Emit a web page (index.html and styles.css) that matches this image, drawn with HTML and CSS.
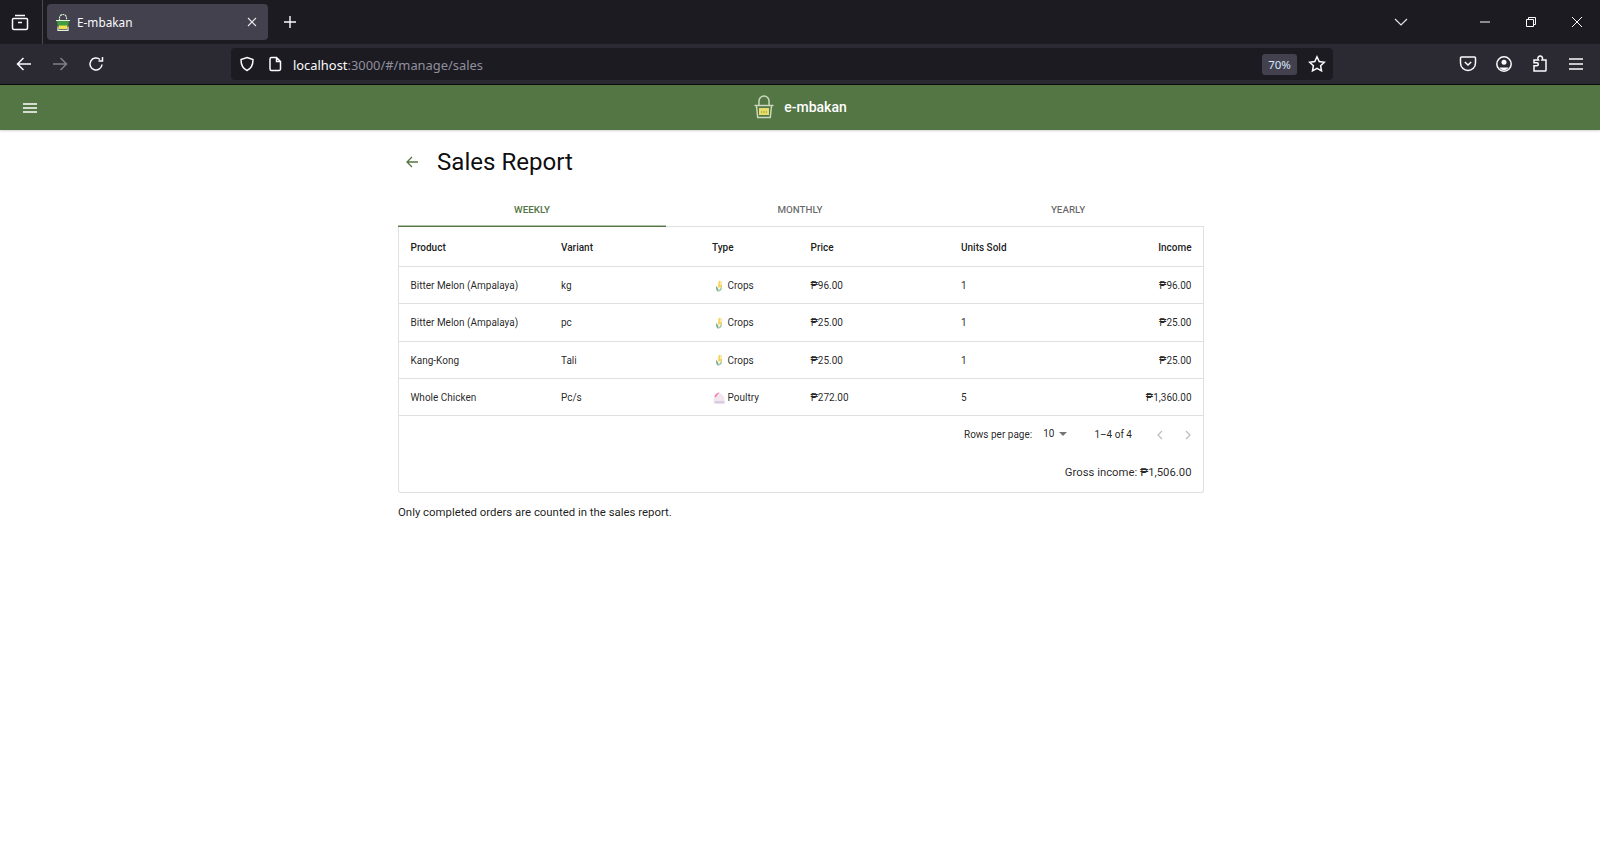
FILE: index.html
```html
<!DOCTYPE html>
<html lang="en">
<head>
<meta charset="utf-8">
<title>E-mbakan</title>
<link rel="stylesheet" href="styles.css">
</head>
<body>
<div class="tabstrip">
  <div class="strip-left">
    <svg class="ico" width="20" height="20" viewBox="0 0 20 20"><path d="M5 3.500h10M3.500 6.500h13a1 1 0 0 1 1 1V16a1.500 1.500 0 0 1-1.500 1.500H4A1.500 1.500 0 0 1 2.500 16V7.500a1 1 0 0 1 1-1zM8 10.500h4"/></svg>
  </div>
  <div class="tab">
    <svg class="favicon" width="14" height="17" viewBox="0 0 14 17"><path class="fav-handle" d="M3.500 7V4a3.500 3.500 0 0 1 7 0v3"/><path class="fav-body" d="M1 6.500h12l-.8 6H1.800z"/><path class="fav-rim" d="M0 6.500h14M2 12.500v3.800h10v-3.800"/><rect class="fav-tag" x="3" y="11.500" width="8" height="3.500"/></svg>
    <span class="tab-title">E-mbakan</span>
    <svg class="ico close" width="12" height="12" viewBox="0 0 12 12"><path d="M2 2l8 8M10 2l-8 8"/></svg>
  </div>
  <svg class="ico newtab" width="16" height="16" viewBox="0 0 16 16"><path d="M8 2v12M2 8h12"/></svg>
  <div class="spacer"></div>
  <svg class="ico listall" width="16" height="16" viewBox="0 0 16 16"><path d="M2 5l6 6 6-6"/></svg>
  <div class="winctl">
    <svg class="ico" width="12" height="12" viewBox="0 0 12 12"><path d="M1 6h10"/></svg>
    <svg class="ico" width="12" height="12" viewBox="0 0 12 12"><path d="M1.500 3.500h7v7h-7zM3.500 3.500v-2h7v7h-2"/></svg>
    <svg class="ico" width="12" height="12" viewBox="0 0 12 12"><path d="M1 1l10 10M11 1L1 11"/></svg>
  </div>
</div>
<div class="toolbar">
  <svg class="ico nav" width="18" height="18" viewBox="0 0 18 18"><path d="M16 9H2.500M8.500 3L2.500 9l6 6"/></svg>
  <svg class="ico nav dim" width="18" height="18" viewBox="0 0 18 18"><path d="M2 9h13.500M9.500 3l6 6-6 6"/></svg>
  <svg class="ico nav" width="18" height="18" viewBox="0 0 18 18"><path d="M15 9.500A6 6 0 1 1 13 4.500M15.500 2v4h-4"/></svg>
  <div class="urlbar">
    <svg class="ico shield" width="16" height="16" viewBox="0 0 16 16"><path d="M8 1.500l6 2c0 5-1.500 9-6 11-4.500-2-6-6-6-11z"/></svg>
    <svg class="ico page" width="14" height="16" viewBox="0 0 14 16"><path d="M2 3a1.500 1.500 0 0 1 1.500-1.500H8.500L12.500 5.500V13a1.500 1.500 0 0 1-1.500 1.500H3.500A1.500 1.500 0 0 1 2 13zM8.500 1.500V5.500h4"/></svg>
    <span class="url"><span class="url-host">localhost</span>:3000/#/manage/sales</span>
    <div class="spacer"></div>
    <span class="zoom">70%</span>
    <svg class="ico star" width="18" height="18" viewBox="0 0 18 18"><path d="M9 1.800l2.200 4.700 5.100.7-3.700 3.500.9 5.100L9 13.400l-4.500 2.400.9-5.100-3.700-3.500 5.100-.7z"/></svg>
  </div>
  <div class="tool-right">
    <svg class="ico" width="18" height="18" viewBox="-1 -1 18 18"><path d="M1.500 1h13a1 1 0 0 1 1 1V7a7.500 7.500 0 0 1-15 0V2a1 1 0 0 1 1-1zM4.800 6L8 9l3.200-3"/></svg>
    <svg class="ico" width="18" height="18" viewBox="0 0 18 18"><circle cx="9" cy="9" r="7.200"/><circle class="solid" cx="9" cy="7.200" r="2.500"/><path class="solid" d="M4.500 12.500h9c-1 1.700-2.600 2.700-4.500 2.700s-3.500-1-4.500-2.700z"/></svg>
    <svg class="ico" width="18" height="18" viewBox="0 0 18 18"><path d="M3 16V10.800H5.800C7.800 10.800 7.800 7.800 5.800 7.800H3V5H7.500L7 4C6.300 2.500 7.800 1 9.200 1s2.900 1.500 2.200 3L11 5h4V15.200a.8.8 0 0 1-.8.8z"/></svg>
    <svg class="ico" width="18" height="18" viewBox="-2 -2 18 18"><path d="M0 2h14M0 7h14M0 12h14"/></svg>
  </div>
</div>
<div class="appbar">
  <svg class="burger" width="14" height="10" viewBox="0 0 14 10"><path d="M0 1h14M0 5h14M0 9h14"/></svg>
  <div class="brand">
    <svg class="logo" width="22" height="24" viewBox="0 0 22 24"><path class="logo-line" d="M6 10V6a5 5 0 0 1 10 0v4"/><path class="logo-line" d="M1.500 10.500h19M3.500 11l1.200 11.500h12.600L18.500 11"/><rect class="logo-tag" x="6" y="13" width="10" height="7"/><path class="logo-dots" d="M8 17h6"/></svg>
    <span class="brand-name">e-mbakan</span>
  </div>
</div>
<main class="content">
  <div class="heading">
    <svg class="back" width="14" height="14" viewBox="0 0 14 14"><path d="M13 7H2M7 2L2 7l5 5"/></svg>
    <h1 class="title">Sales Report</h1>
  </div>
  <div class="tabs">
    <div class="tabs-item active">Weekly</div>
    <div class="tabs-item">Monthly</div>
    <div class="tabs-item">Yearly</div>
  </div>
  <div class="card">
    <table class="report">
      <thead>
        <tr>
          <th class="c-product">Product</th>
          <th class="c-variant">Variant</th>
          <th class="c-type">Type</th>
          <th class="c-price">Price</th>
          <th class="c-units">Units Sold</th>
          <th class="c-income">Income</th>
        </tr>
      </thead>
      <tbody>
        <tr>
          <td>Bitter Melon (Ampalaya)</td><td>kg</td>
          <td><span class="type"><svg class="emoji" width="14" height="12" viewBox="0 0 14 12"><use href="#corn"/></svg>Crops</span></td>
          <td>₱96.00</td><td>1</td><td class="c-income">₱96.00</td>
        </tr>
        <tr>
          <td>Bitter Melon (Ampalaya)</td><td>pc</td>
          <td><span class="type"><svg class="emoji" width="14" height="12" viewBox="0 0 14 12"><use href="#corn"/></svg>Crops</span></td>
          <td>₱25.00</td><td>1</td><td class="c-income">₱25.00</td>
        </tr>
        <tr>
          <td>Kang-Kong</td><td>Tali</td>
          <td><span class="type"><svg class="emoji" width="14" height="12" viewBox="0 0 14 12"><use href="#corn"/></svg>Crops</span></td>
          <td>₱25.00</td><td>1</td><td class="c-income">₱25.00</td>
        </tr>
        <tr class="row-last">
          <td>Whole Chicken</td><td>Pc/s</td>
          <td><span class="type"><svg class="emoji" width="14" height="12" viewBox="0 0 14 12"><use href="#hen"/></svg>Poultry</span></td>
          <td>₱272.00</td><td>5</td><td class="c-income">₱1,360.00</td>
        </tr>
      </tbody>
    </table>
    <div class="pager">
      <span>Rows per page:</span>
      <span class="pager-select">10<svg class="caret" width="8" height="4" viewBox="0 0 8 4"><path d="M0 0h8L4 4z"/></svg></span>
      <span class="pager-range">1–4 of 4</span>
      <svg class="chev" width="8" height="10" viewBox="0 0 8 10"><path d="M6 1L2 5l4 4"/></svg>
      <svg class="chev" width="8" height="10" viewBox="0 0 8 10"><path d="M2 1l4 4-4 4"/></svg>
    </div>
    <div class="gross">Gross income: ₱1,506.00</div>
  </div>
  <p class="note">Only completed orders are counted in the sales report.</p>
</main>
<svg class="defs" width="0" height="0">
  <symbol id="corn" viewBox="0 0 14 12">
    <path fill="#f4d35e" d="M6.500 1.500C7.500 0 10 .500 10 3.500V7.500H6z"/>
    <path fill="#f9edb5" d="M8 1C9.500 1.500 10 3 10 5H8z"/>
    <path fill="#7fb08a" d="M4 6C5.500 7 6.500 8.500 6.800 11.500H5.500C4.300 10.500 3.800 8 4 6z"/>
    <path fill="#9fc7a4" d="M10 7C10 9.500 9 11 6.800 11.500 7 9.500 8.200 8 10 7z"/>
  </symbol>
  <symbol id="hen" viewBox="0 0 14 12">
    <path fill="#f3e6ee" d="M1.500 11.500V7C1.500 4 4 1.500 7 1.500s5.500 2.500 5.500 5.500v4.500z"/>
    <path fill="#f07fa8" d="M2.500 4.500C3.500 2 5 .500 8 .500 6.500 1.500 5 3 3.800 5.500z"/>
    <path fill="#d9cbe3" d="M3 9h9.500v2.500H3z"/>
  </symbol>
</svg>
</body>
</html>
```
FILE: styles.css
```css
* { box-sizing: border-box; }
html, body { margin: 0; height: 100%; background: #fff; overflow: hidden; }
body { font-family: Roboto, "Liberation Sans", sans-serif; color: rgba(0,0,0,.87); }
.spacer { flex: 1; }
.defs { display: block; }

.ico { fill: none; stroke: #fbfbfe; stroke-width: 1.5; flex: none; display: block; }
.ico .solid { fill: #fbfbfe; stroke: none; }

.tabstrip { height: 44px; background: #1c1b22; display: flex; align-items: center; }
.strip-left { width: 43px; height: 44px; border-right: 1px solid #4a4950; display: flex; align-items: center; justify-content: center; padding-right: 2px; }
.tab { width: 221px; height: 36px; margin-left: 4px; background: #42414d; border-radius: 4px; display: flex; align-items: center; padding: 0 10px 0 9px; color: #fbfbfe; font: 400 11.800px "Noto Sans", Roboto, sans-serif; }
.favicon { margin-right: 7px; flex: none; }
.fav-handle { fill: none; stroke: #d8f0d0; stroke-width: 1.200; stroke-dasharray: 2 .6; }
.fav-body { fill: #3f9b3f; }
.fav-rim { fill: none; stroke: #e8f4e0; stroke-width: 1.200; }
.fav-tag { fill: #f4e04d; }
.tab-title { flex: 1; }
.close { stroke-width: 1.100; opacity: .9; }
.newtab { margin-left: 14px; stroke-width: 1.400; }
.listall { margin-right: 70px; stroke-width: 1.200; opacity: .9; }
.winctl { display: flex; gap: 34px; padding-right: 17px; }
.winctl .ico { stroke-width: 1; }

.toolbar { height: 41px; background: #2b2a33; border-bottom: 1px solid #0c0c0d; display: flex; align-items: center; padding-left: 15px; }
.nav { margin-right: 18px; }
.nav.dim { opacity: .4; }
.urlbar { width: 1102px; height: 32px; margin-left: 108px; background: #1c1b22; border-radius: 4px; display: flex; align-items: center; padding: 0 7px 0 8px; }
.shield { margin-right: 13px; }
.page { margin-right: 11px; }
.url { color: #8f8f9d; font: 400 12.900px "Noto Sans", Roboto, sans-serif; margin-top: 1px; }
.url-host { color: #fbfbfe; }
.zoom { width: 35px; height: 21px; background: #42414d; border-radius: 3px; color: #d6e6ff; font: 400 11.500px/21px "Noto Sans", Roboto, sans-serif; text-align: center; margin-right: 11px; }
.tool-right { display: flex; align-items: center; gap: 18px; margin-left: 126px; }

.appbar { height: 45px; background: #547544; position: relative; display: flex; align-items: center; justify-content: center; box-shadow: 0 1px 2px rgba(0,0,0,.18); }
.burger { position: absolute; left: 23px; top: 18px; fill: none; stroke: #fff; stroke-width: 1.400; }
.brand { display: flex; align-items: center; gap: 9px; padding-bottom: 1px; }
.logo { display: block; }
.logo-line { fill: none; stroke: #c9d8bd; stroke-width: 1.500; }
.logo-tag { fill: #e6de6c; }
.logo-dots { stroke: #b5a83c; stroke-width: 1.500; stroke-dasharray: 1.500 1; }
.brand-name { color: #fff; font-weight: 500; font-size: 14px; }

.content { padding: 0 396px 0 398px; }
.heading { display: flex; align-items: center; height: 61px; padding: 2px 0 0 7px; }
.back { fill: none; stroke: #547544; stroke-width: 1.300; margin-right: 18px; }
.title { margin: 0; font-size: 24.100px; font-weight: 400; color: rgba(0,0,0,.95); }
.tabs { display: flex; height: 31px; border-bottom: 1px solid #e0e0e0; margin-top: 5px; }
.tabs-item { flex: none; width: 268px; height: 31px; text-transform: uppercase; font-size: 9.800px; font-weight: 500; color: rgba(0,0,0,.6); display: flex; align-items: center; justify-content: center; padding-bottom: 4px; }
.tabs-item.active { color: #547544; border-bottom: 1px solid #547544; padding-bottom: 3px; box-shadow: inset 0 -1px 0 rgba(84,117,68,.45); }

.card { border: 1px solid #e0e0e0; border-top: 0; border-radius: 0 0 3px 3px; height: 266px; }
.report { width: 100%; border-collapse: collapse; table-layout: fixed; font-size: 10px; }
.report th { height: 39.500px; text-align: left; font-weight: 500; padding: 1px 11.500px 0; border-bottom: 1px solid #e0e0e0; color: rgba(0,0,0,.9); }
.report td { height: 37.250px; padding: 1px 11.500px 0; border-bottom: 1px solid #e0e0e0; }
.report .row-last td { padding-top: 2px; }
.report .c-income { text-align: right; }
.c-product { width: 150.500px; }
.c-variant { width: 151px; }
.c-type { width: 98.500px; }
.c-price { width: 150.500px; }
.c-units { width: 128px; }
.type { display: flex; align-items: center; gap: 1.500px; }
.emoji { display: block; flex: none; }

.pager { height: 37px; display: flex; align-items: center; justify-content: flex-end; font-size: 10px; padding-right: 11px; }
.pager-select { display: flex; align-items: center; gap: 5px; margin-left: 11px; padding-bottom: 2px; }
.caret { fill: #757575; }
.pager-range { margin: 0 24px 0 27px; }
.chev { fill: none; stroke: #bdbdbd; stroke-width: 1.200; }
.chev + .chev { margin-left: 20px; }
.gross { text-align: right; font-size: 11.300px; padding: 13px 11.500px 0 0; }
.note { margin: 12px 0 0; font-size: 11.400px; color: rgba(0,0,0,.9); }
```
